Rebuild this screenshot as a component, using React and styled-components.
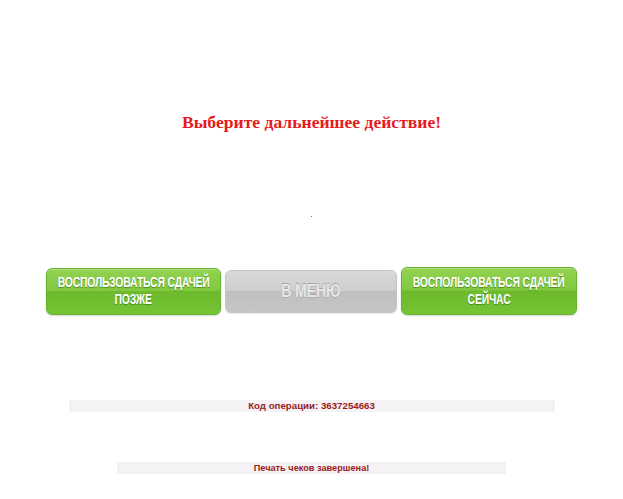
import React from 'react';
import styled, { createGlobalStyle } from 'styled-components';

const GlobalStyle = createGlobalStyle`
  body {
    margin: 0;
    background: #fff;
  }
`;

const Page = styled.div`
  width: 623px;
  height: 499px;
  display: flex;
  flex-direction: column;
  align-items: center;
  padding-top: 111px;
  box-sizing: border-box;
`;

const Title = styled.h1`
  margin: 0;
  height: 22px;
  line-height: 22px;
  font-family: "Liberation Serif", "Times New Roman", serif;
  font-size: 17.6px;
  font-weight: bold;
  color: #e51b1b;
`;

const Dot = styled.div`
  width: 1px;
  height: 1px;
  margin-top: 83px;
  background: #777;
`;

const ButtonRow = styled.div`
  display: flex;
  align-items: center;
  gap: 4px;
  margin-top: 50px;
  height: 48px;
`;

const Button = styled.button`
  width: ${(p) => p.$w}px;
  height: ${(p) => p.$h}px;
  padding: 0;
  border-radius: 6px;
  display: flex;
  flex-direction: column;
  align-items: center;
  justify-content: center;
  font-family: "Liberation Sans", Arial, sans-serif;
  font-weight: bold;
  cursor: pointer;
  box-sizing: border-box;
  ${(p) =>
    p.$gray
      ? `
    border: 1px solid #c4c4c4;
    background: linear-gradient(#dadada 0%, #cecece 48%, #bfbfbf 50%, #c6c6c6 100%);
    color: #e6e6e6;
    font-size: 19px;
    text-shadow: 0 -1px 0 #a4a4a4, 0 1px 1px #b0b0b0;
    box-shadow: 0 1px 1px rgba(0,0,0,0.08);
  `
      : `
    border: 1px solid #66b22c;
    background: linear-gradient(#92d250 0%, #82c941 48%, #6cba2b 50%, #76c334 100%);
    color: #fff;
    font-size: 14px;
    line-height: 17px;
    text-shadow: 0 1px 1px rgba(40,90,10,0.55);
    box-shadow: 0 1px 2px rgba(0,0,0,0.15), inset 0 1px 0 rgba(255,255,255,0.3);
  `}
`;

const Label = styled.span`
  display: block;
  white-space: nowrap;
  transform: scaleX(0.74);
  letter-spacing: -0.2px;
`;

const InfoBar = styled.div`
  width: ${(p) => p.$w}px;
  height: 12px;
  margin-top: ${(p) => p.$top}px;
  background: #f4f2f4;
  text-align: center;
  font-family: "Liberation Sans", Arial, sans-serif;
  font-weight: bold;
  font-size: ${(p) => p.$size}px;
  line-height: 12px;
  color: #9c1a1a;
`;

export default function App() {
  return (
    <>
      <GlobalStyle />
      <Page>
        <Title>Выберите дальнейшее действие!</Title>
        <Dot />
        <ButtonRow>
          <Button $w={175} $h={47}>
            <Label>ВОСПОЛЬЗОВАТЬСЯ СДАЧЕЙ</Label>
            <Label>ПОЗЖЕ</Label>
          </Button>
          <Button $gray $w={172} $h={43}>
            <Label>В МЕНЮ</Label>
          </Button>
          <Button $w={176} $h={48}>
            <Label>ВОСПОЛЬЗОВАТЬСЯ СДАЧЕЙ</Label>
            <Label>СЕЙЧАС</Label>
          </Button>
        </ButtonRow>
        <InfoBar $w={486} $top={85} $size={9.7}>Код операции: 3637254663</InfoBar>
        <InfoBar $w={389} $top={50} $size={9.2}>Печать чеков завершена!</InfoBar>
      </Page>
    </>
  );
}
